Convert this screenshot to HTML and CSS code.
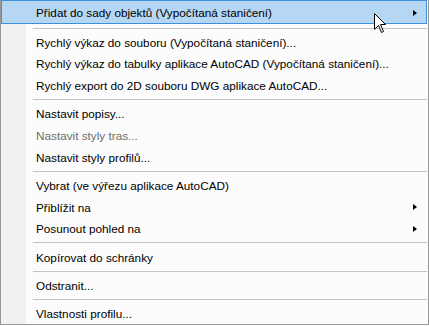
FILE: index.html
```html
<!DOCTYPE html>
<html>

<head>
	<meta charset="utf-8" />
	<title>Kontextová nabídka profilu</title>
	<link rel="stylesheet" href="styles.css">
</head>

<body>
	<div class="menu">
		<div class="item first hot">
			<span>Přidat do sady objektů (Vypočítaná staničení)</span>
			<span class="arrow"></span>
		</div>
		<div class="sep"></div>
		<div class="item">Rychlý výkaz do souboru (Vypočítaná staničení)...</div>
		<div class="item">Rychlý výkaz do tabulky aplikace AutoCAD (Vypočítaná staničení)...</div>
		<div class="item">Rychlý export do 2D souboru DWG aplikace AutoCAD...</div>
		<div class="sep"></div>
		<div class="item">Nastavit popisy...</div>
		<div class="item disabled">Nastavit styly tras...</div>
		<div class="item">Nastavit styly profilů...</div>
		<div class="sep"></div>
		<div class="item">Vybrat (ve výřezu aplikace AutoCAD)</div>
		<div class="item">
			<span>Přiblížit na</span>
			<span class="arrow"></span>
		</div>
		<div class="item">
			<span>Posunout pohled na</span>
			<span class="arrow"></span>
		</div>
		<div class="sep"></div>
		<div class="item">Kopírovat do schránky</div>
		<div class="sep"></div>
		<div class="item">Odstranit...</div>
		<div class="sep"></div>
		<div class="item">Vlastnosti profilu...</div>

		<!-- kurzor mysi nad prvni polozkou -->
		<svg class="cursor" width="13" height="21" viewBox="0 0 13 21">
			<path d="M0.5 0.5 L0.5 16.5 L4.5 12.5 L7.5 19.5 L9.5 18.5 L6.5 11.5 L11.5 11.5 Z" fill="#fff" stroke="#000" stroke-width="1" />
		</svg>
	</div>
</body>

</html>
```

FILE: styles.css
```css
body {
	margin: 0;
	background-color: #fff;
	font: normal 11.75px "Liberation Sans", Arial, sans-serif;
	color: #000;
}

.menu {
	position: relative;
	width: 429px;
	box-sizing: border-box;
	border: 1px solid #979797;
	border-top: none;
	background: linear-gradient(to right, #f1f1f1 25px, #fcfcfc 25px);
}

.item {
	display: flex;
	align-items: center;
	justify-content: space-between;
	height: 21.67px;
	box-sizing: border-box;
	padding: 1.5px 11px 0 35px;
	white-space: nowrap;
}

.first {
	height: 24px;
}

.hot {
	margin-right: 1px;
	padding: 1px 9px 0 34px;
	border: 1px solid #3b8fdd;
	background-color: #b6d7f4;
}

.disabled {
	color: #6d6d6d;
}

.arrow {
	width: 0;
	height: 0;
	border-left: 4px solid #000;
	border-top: 3.5px solid transparent;
	border-bottom: 3.5px solid transparent;
}

.sep {
	height: 6.67px;
	margin: 0 1px 0 32px;
	box-sizing: border-box;
	padding-top: 3.5px;
}

.sep::after {
	content: "";
	display: block;
	height: 1px;
	background-color: #c4c4c4;
}

.cursor {
	position: absolute;
	left: 373px;
	top: 13px;
}
```
